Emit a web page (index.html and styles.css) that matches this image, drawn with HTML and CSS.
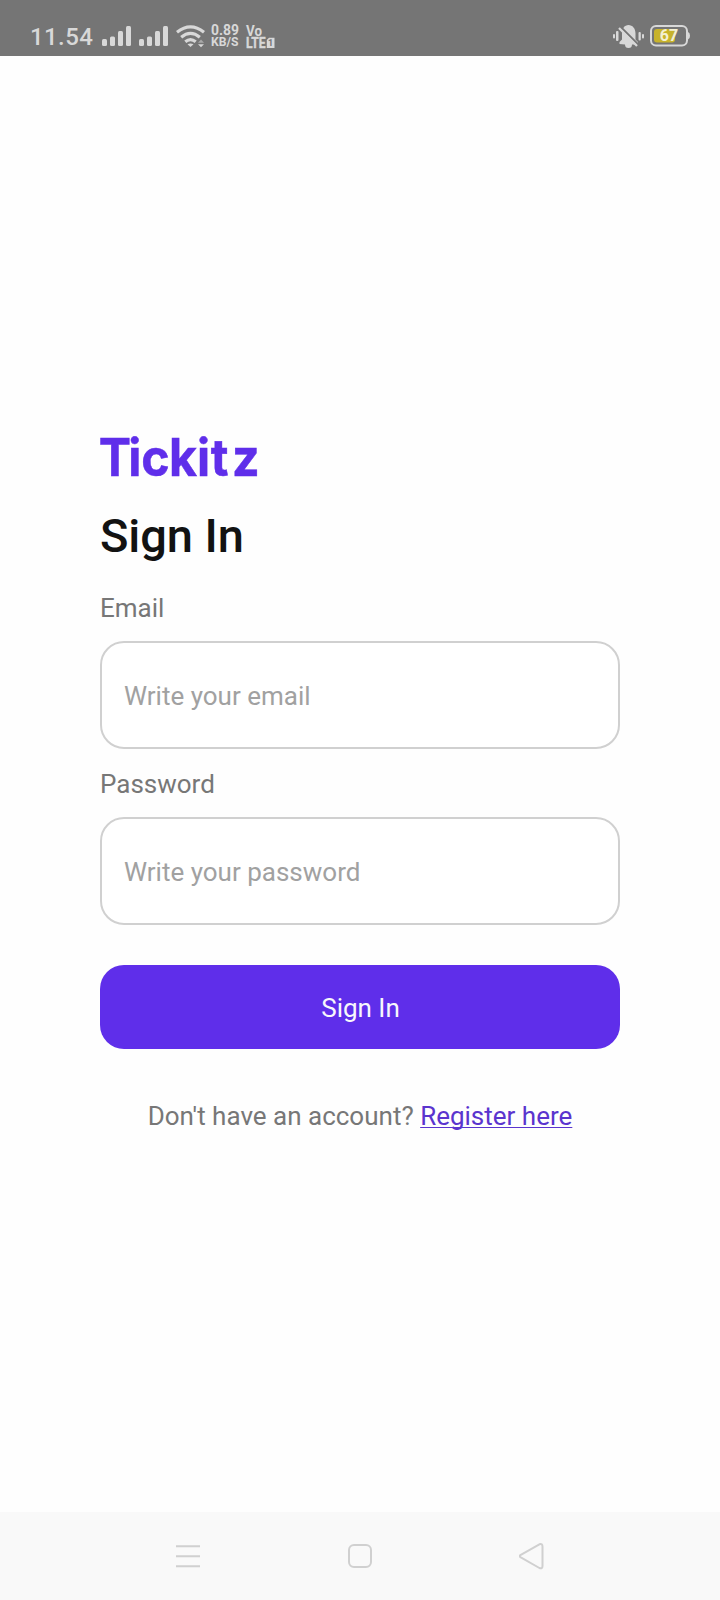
FILE: index.html
```html
<!DOCTYPE html>
<html lang="en">
<head>
<meta charset="utf-8">
<title>Tickitz - Sign In</title>
<link rel="stylesheet" href="styles.css">
</head>
<body>
<div class="screen">
  <header class="status">
    <span class="time">11.54</span>
    <svg class="signal" width="66" height="24" viewBox="0 0 66 24" fill="#d8d8d8">
      <rect x="0" y="15" width="5" height="7" rx="1.5"/><rect x="8" y="12.5" width="5" height="9.500" rx="1.5"/><rect x="16" y="7" width="5" height="15" rx="1.5"/><rect x="24" y="2" width="5" height="20" rx="1.500"/>
      <rect x="37" y="15" width="5" height="7" rx="1.5"/><rect x="45" y="12.5" width="5" height="9.500" rx="1.5"/><rect x="53" y="7" width="5" height="15" rx="1.5"/><rect x="61" y="2" width="5" height="20" rx="1.500"/>
    </svg>
    <svg class="wifi" width="30" height="24" viewBox="0 0 30 24">
      <g fill="none" stroke="#d8d8d8" stroke-width="3.2">
        <path d="M1 8.200Q14.500-2.500 28 8.200"/><path d="M5.200 13.200Q14.500 5.500 23.800 13.200"/><path d="M9.300 17.800Q14.500 13.500 19.700 17.800"/>
      </g>
      <path d="M11.500 20.300Q14.500 18.500 17.500 20.300L14.500 23Z" fill="#d8d8d8"/>
      <path d="M22 18.800L25 15.500L28 18.800Z" fill="#a9a9a9"/><path d="M22 20.300H28L25 23.300Z" fill="#d8d8d8"/>
    </svg>
    <svg class="speed" width="30" height="26" viewBox="0 0 30 26">
      <text class="rate" x="0" y="11" textLength="28" lengthAdjust="spacingAndGlyphs">0.89</text>
      <text class="unit" x="0" y="22.300" textLength="27.500" lengthAdjust="spacingAndGlyphs">KB/S</text>
    </svg>
    <svg class="volte" width="32" height="26" viewBox="0 0 32 26">
      <text class="vo" x="0" y="12" textLength="16" lengthAdjust="spacingAndGlyphs">Vo</text>
      <text class="lte" x="0" y="23.800" textLength="19.500" lengthAdjust="spacingAndGlyphs">LTE</text>
      <path d="M23 13.800H28.500V24H20.800V16Z" fill="#d8d8d8"/>
      <text class="sim" x="24.700" y="22.200" text-anchor="middle">1</text>
    </svg>
    <svg class="bell" width="32" height="24" viewBox="0 0 32 24">
      <g fill="#d8d8d8">
        <path d="M6.500 20V18L9 15.500V9.500C9 4.500 11.500 1 15.500 1S22.500 4.500 22.500 9.500V15.500L25 18V20.500H19A3.500 3.500 0 0 1 12 20.500Z"/>
        <rect x="0" y="10" width="2" height="4.500" rx="1"/><rect x="3" y="7" width="2.500" height="10" rx="1"/>
        <rect x="25.500" y="8" width="2.300" height="8.500" rx="1"/><rect x="29" y="10" width="2" height="4.500" rx="1"/>
      </g>
      <path d="M7.500 2.800L26 21.300" stroke="#757575" stroke-width="2"/><path d="M6 4L24 22" stroke="#d8d8d8" stroke-width="2.300"/>
    </svg>
    <svg class="battery" width="41" height="24" viewBox="0 0 41 24">
      <rect x="1" y="2" width="36" height="19.500" rx="5" fill="none" stroke="#d8d8d8" stroke-width="2"/>
      <path d="M38 8Q40 8.500 40 11.700T38 15.500Z" fill="#d8d8d8"/>
      <rect x="4" y="5" width="21" height="13.500" rx="3" fill="#c8b32b"/>
      <text class="charge" x="19" y="17.200" text-anchor="middle">67</text>
    </svg>
  </header>

  <main class="form">
    <svg class="logo" width="162" height="50" viewBox="0 0 162 50">
      <text class="logo-text" transform="scale(.93 1)" x="-1.3 30.400 44.300 74.200 104.300 119 142" y="43">Tickitz</text>
    </svg>
    <h1 class="title">Sign In</h1>
    <label class="label" for="email">Email</label>
    <input class="field" id="email" type="email" placeholder="Write your email">
    <label class="label second" for="password">Password</label>
    <input class="field" id="password" type="password" placeholder="Write your password">
    <button class="submit" type="button">Sign In</button>
    <p class="register">Don't have an account? <a class="link" href="#">Register here</a></p>
  </main>

  <nav class="nav">
    <svg width="26" height="28" viewBox="0 0 26 28" fill="none" stroke="#d0d0d0" stroke-width="2"><path d="M1 4.300H25M1 14.300H25M1 24.300H25"/></svg>
    <svg width="26" height="28" viewBox="0 0 26 28" fill="none" stroke="#d0d0d0" stroke-width="2"><rect x="2" y="3" width="22" height="22" rx="5"/></svg>
    <svg width="26" height="28" viewBox="1 0 26 28" fill="none" stroke="#d0d0d0" stroke-width="2" stroke-linejoin="round"><path d="M2.800 12.900L21.400 2.300Q24.500 1.300 24.500 4.500V24Q24.500 27.200 21.400 26L2.800 15.400Q.8 14.200 2.800 12.900Z"/></svg>
  </nav>
</div>
</body>
</html>
```
FILE: styles.css
```css
* { box-sizing: border-box; }
body { margin: 0; background: #fff; font-family: Roboto, sans-serif; }
.screen { width: 720px; height: 1600px; display: flex; flex-direction: column; background: #fefefe; }
.status { height: 56px; flex: none; background: #757575; color: #d8d8d8; display: flex; align-items: flex-start; padding: 24px 29px 0 30px; }
.status svg { display: block; flex: none; overflow: visible; }
.time { width: 72px; font-size: 24px; font-weight: 500; line-height: 26px; letter-spacing: .4px; white-space: nowrap; }
.wifi { margin-left: 8px; }
.speed { margin-left: 5px; }
.volte { margin-left: 5px; }
.rate, .unit, .vo, .lte, .sim { font-weight: 700; fill: #d8d8d8; }
.rate { font-size: 14.5px; }
.unit { font-size: 12.5px; }
.vo { font-size: 14px; }
.lte { font-size: 14px; stroke: #d8d8d8; stroke-width: .4px; }
.sim { font-size: 9px; fill: #757575; }
.bell { margin-left: auto; }
.battery { margin-left: 5px; }
.charge { font: 700 16px Roboto, sans-serif; fill: #f4f0d2; }
.form { flex: 1; display: flex; flex-direction: column; padding: 377px 100px 0; }
.logo { display: block; flex: none; overflow: visible; }
.logo-text { font: 700 52px Inter, sans-serif; fill: #5f2eea; stroke: #5f2eea; stroke-width: .5px; }
.title { margin: 25px 0 0; font-size: 47px; font-weight: 500; line-height: 56px; letter-spacing: -.1px; color: #121212; }
.label { margin-top: 29px; font-size: 26px; line-height: 30px; color: #777; }
.label.second { margin-top: 20px; }
.field { flex: none; width: 100%; height: 108px; margin: 18px 0 0; padding: 2px 22px 0; border: 2px solid #d0d0d0; border-radius: 24px; background: #fff; font: 26px Roboto, sans-serif; color: #333; outline: 0; }
.field::placeholder { color: #a1a1a1; opacity: 1; }
.submit { flex: none; height: 84px; margin: 40px 0 0; padding: 2px 0 0 1px; border: 0; border-radius: 24px; background: #5f2eea; color: #f7f7fc; font: 26px Roboto, sans-serif; }
.register { margin: 52px 0 0; font-size: 26px; line-height: 30px; text-align: center; color: #777; white-space: nowrap; }
.link { color: #5a34ce; text-decoration: underline; text-decoration-thickness: 1px; text-decoration-skip-ink: none; text-underline-offset: 2px; }
.nav { height: 88px; flex: none; display: flex; justify-content: space-between; align-items: center; padding: 0 175px; background: #f9f9f9; }
```
